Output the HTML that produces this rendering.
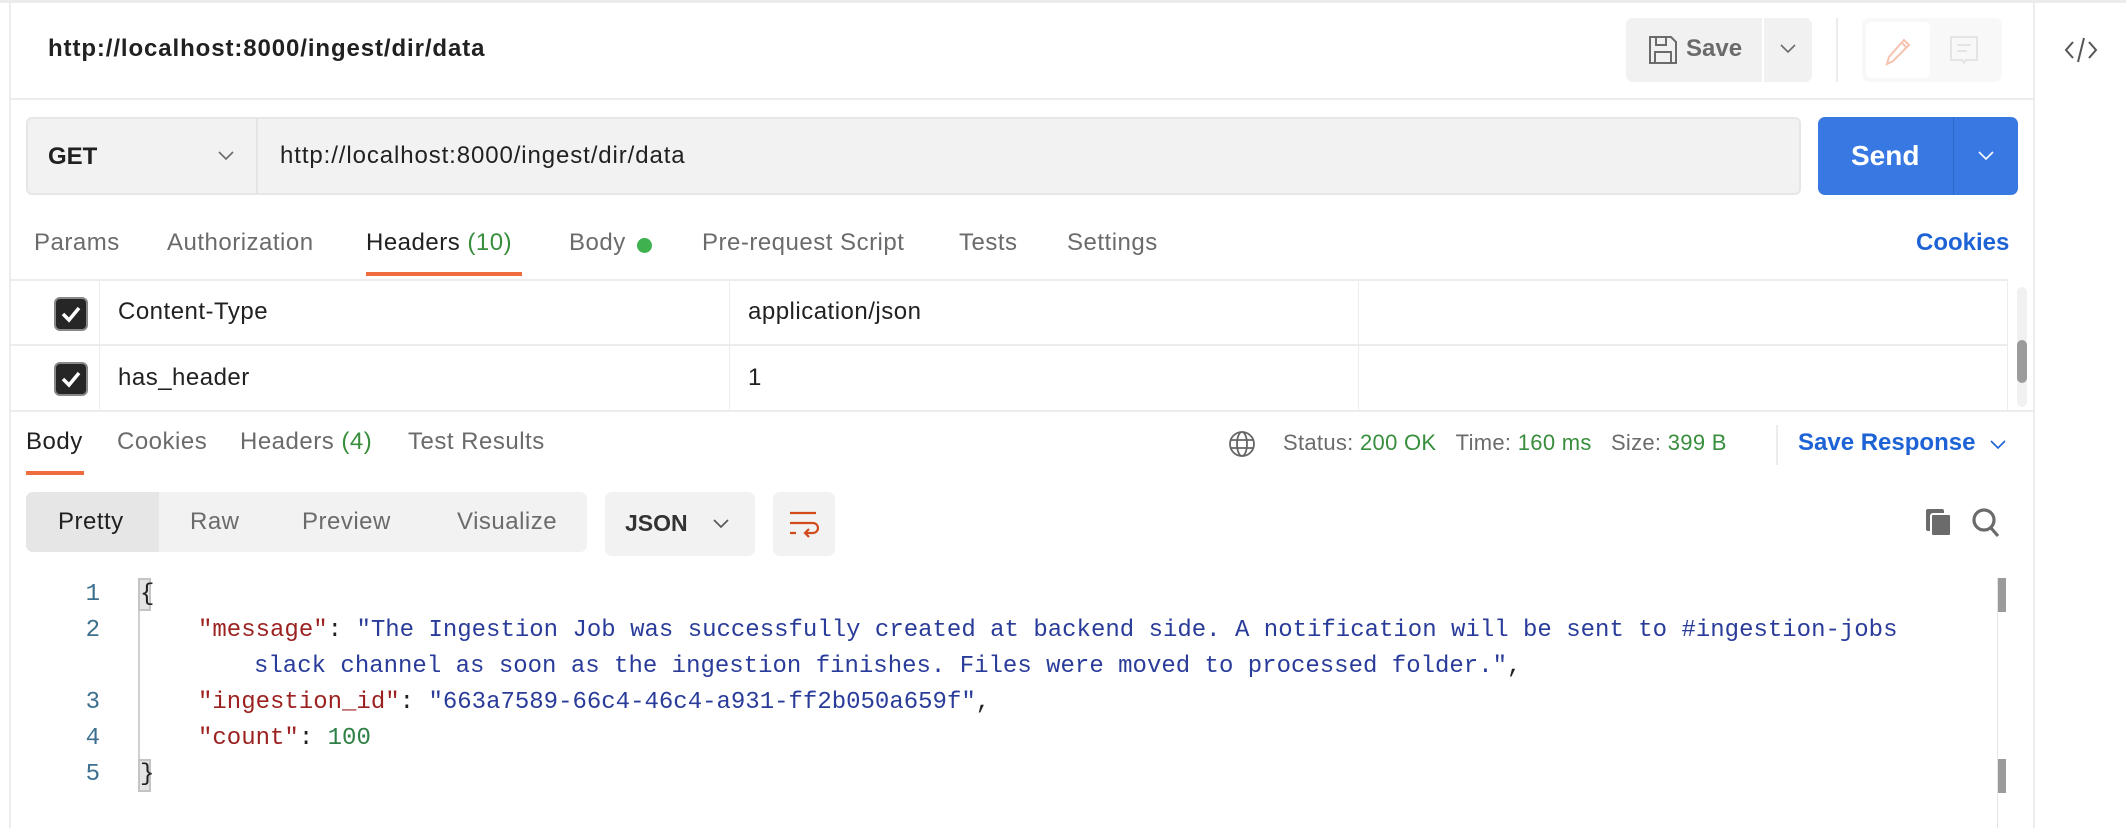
<!DOCTYPE html>
<html><head><meta charset="utf-8"><style>
*{box-sizing:border-box;margin:0;padding:0}
body{width:2126px;height:828px;background:#fff;position:relative;overflow:hidden;font-family:"Liberation Sans",Arial,sans-serif;color:#212121}
.a{position:absolute;white-space:nowrap}
.u{font-size:24px;letter-spacing:.5px}
.tab{font-size:24px;letter-spacing:.5px;color:#6b6b6b;top:229px}
.rt{font-size:24px;letter-spacing:.5px;color:#6b6b6b;top:428px}
.g{color:#388e3c}
.code{font-family:"Liberation Mono",monospace;font-size:24px;line-height:36px}
.ln{color:#3d6f8e;text-align:right;width:30px;left:70px}
.k{color:#9c2222}.s{color:#2a3c9a}.n{color:#2e8046}
</style></head><body>
<div class="a" style="left:0;top:0;width:2126px;height:3px;background:#ececec"></div>
<div class="a" style="left:9px;top:0;width:2px;height:828px;background:#ededed"></div>
<div class="a" style="left:2033px;top:0;width:2px;height:828px;background:#ededed"></div>
<div class="a" style="left:10px;top:98px;width:2023px;height:2px;background:#ececec"></div>
<div class="a" style="left:48px;top:35px;font-size:24px;letter-spacing:.9px;font-weight:bold;color:#212121">http://localhost:8000/ingest/dir/data</div>

<div class="a" style="left:1626px;top:18px;width:136px;height:64px;background:#f1f1f1;border-radius:7px 0 0 7px"></div>
<svg class="a" style="left:1648px;top:35px" width="30" height="30" viewBox="0 0 30 30" fill="none" stroke="#6b6b6b" stroke-width="2"><path d="M2 2h21l5 5v21H2z M8 2v8h10V2 M7 28V17h16v11"/></svg>
<div class="a" style="left:1686px;top:35px;font-size:24px;font-weight:bold;color:#6b6b6b">Save</div>
<div class="a" style="left:1764px;top:18px;width:48px;height:64px;background:#f1f1f1;border-radius:0 7px 7px 0"></div>
<svg class="a" style="left:1780px;top:44px" width="16" height="10"><path d="M1 1l7 7 7-7" stroke="#6b6b6b" stroke-width="1.6" fill="none"/></svg>
<div class="a" style="left:1836px;top:18px;width:2px;height:64px;background:#ececec"></div>
<div class="a" style="left:1862px;top:18px;width:140px;height:64px;background:#f8f8f8;border-radius:7px"></div>
<div class="a" style="left:1866px;top:22px;width:64px;height:56px;background:#fff;border-radius:6px"></div>
<svg class="a" style="left:1884px;top:36px" width="28" height="30"><path d="M3 28l2-7L20 4l5 5L9 25z M18 7l4 4" stroke="#f5c3b0" stroke-width="2" fill="none"/></svg>
<svg class="a" style="left:1949px;top:35px" width="30" height="30"><path d="M2 2h26v23H17l-2 3-2-3H2z M8 10h14 M8 16h10" stroke="#e4e4e4" stroke-width="2" fill="none"/></svg>
<svg class="a" style="left:2064px;top:36px" width="34" height="28" fill="none" stroke="#555" stroke-width="2"><path d="M9 6L2 14l7 8M25 6l7 8-7 8M20 2l-6 24"/></svg>

<div class="a" style="left:26px;top:117px;width:1775px;height:78px;background:#f2f2f2;border:2px solid #e6e6e6;border-radius:6px"></div>
<div class="a" style="left:256px;top:119px;width:2px;height:74px;background:#e4e4e4"></div>
<div class="a" style="left:48px;top:143px;font-size:24px;font-weight:bold">GET</div>
<svg class="a" style="left:218px;top:151px" width="16" height="10"><path d="M1 1l7 7 7-7" stroke="#6b6b6b" stroke-width="1.6" fill="none"/></svg>
<div class="a" style="left:280px;top:142px;font-size:24px;letter-spacing:.9px;color:#212121">http://localhost:8000/ingest/dir/data</div>
<div class="a" style="left:1818px;top:117px;width:200px;height:78px;background:#3878e2;border-radius:7px"></div>
<div class="a" style="left:1953px;top:117px;width:1px;height:78px;background:#2b68cc"></div>
<div class="a" style="left:1851px;top:140px;font-size:28px;font-weight:bold;color:#fff">Send</div>
<svg class="a" style="left:1978px;top:151px" width="16" height="10"><path d="M1 1l7 7 7-7" stroke="#fff" stroke-width="1.6" fill="none"/></svg>

<div class="a tab" style="left:34px">Params</div>
<div class="a tab" style="left:167px">Authorization</div>
<div class="a tab" style="left:366px;color:#212121">Headers <span class="g">(10)</span></div>
<div class="a" style="left:366px;top:272px;width:156px;height:4px;background:#ef6c3f"></div>
<div class="a tab" style="left:569px">Body</div>
<div class="a" style="left:637px;top:238px;width:15px;height:15px;border-radius:50%;background:#3fb24f"></div>
<div class="a tab" style="left:702px">Pre-request Script</div>
<div class="a tab" style="left:959px">Tests</div>
<div class="a tab" style="left:1067px">Settings</div>
<div class="a" style="left:1916px;top:229px;font-size:24px;font-weight:bold;color:#1e63d6">Cookies</div>

<div class="a" style="left:10px;top:279px;width:1998px;height:2px;background:#ececec"></div>
<div class="a" style="left:10px;top:344px;width:1998px;height:2px;background:#ececec"></div>
<div class="a" style="left:10px;top:410px;width:2023px;height:2px;background:#ececec"></div>
<div class="a" style="left:99px;top:281px;width:1px;height:130px;background:#ececec"></div>
<div class="a" style="left:729px;top:281px;width:1px;height:130px;background:#ececec"></div>
<div class="a" style="left:1358px;top:281px;width:1px;height:130px;background:#ececec"></div>
<div class="a" style="left:2007px;top:281px;width:1px;height:130px;background:#ececec"></div>
<div class="a" style="left:2017px;top:287px;width:10px;height:120px;background:#f1f1f1;border-radius:5px"></div>
<div class="a" style="left:2017px;top:340px;width:10px;height:43px;background:#9b9b9b;border-radius:5px"></div>
<div class="a" style="left:54px;top:297px;width:34px;height:34px;background:#262626;border:2px solid #888;border-radius:6px"></div>
<svg class="a" style="left:60px;top:305px" width="22" height="18"><path d="M3 9l6 6L19 3" stroke="#fff" stroke-width="3.5" fill="none"/></svg>
<div class="a" style="left:54px;top:362px;width:34px;height:34px;background:#262626;border:2px solid #888;border-radius:6px"></div>
<svg class="a" style="left:60px;top:370px" width="22" height="18"><path d="M3 9l6 6L19 3" stroke="#fff" stroke-width="3.5" fill="none"/></svg>
<div class="a u" style="left:118px;top:298px">Content-Type</div>
<div class="a u" style="left:748px;top:298px">application/json</div>
<div class="a u" style="left:118px;top:364px">has_header</div>
<div class="a u" style="left:748px;top:364px">1</div>

<div class="a rt" style="left:26px;color:#212121">Body</div>
<div class="a" style="left:26px;top:471px;width:58px;height:4px;background:#ef6c3f"></div>
<div class="a rt" style="left:117px">Cookies</div>
<div class="a rt" style="left:240px">Headers <span class="g">(4)</span></div>
<div class="a rt" style="left:408px">Test Results</div>
<svg class="a" style="left:1228px;top:430px" width="28" height="28" fill="none" stroke="#666" stroke-width="1.8"><circle cx="14" cy="14" r="12"/><ellipse cx="14" cy="14" rx="5" ry="12"/><path d="M2 10h24M2 18h24"/></svg>
<div class="a" style="left:1283px;top:430px;font-size:22px;letter-spacing:.3px;color:#6b6b6b">Status: <span class="g">200 OK</span>&nbsp;&nbsp;&nbsp;Time: <span class="g">160 ms</span>&nbsp;&nbsp;&nbsp;Size: <span class="g">399 B</span></div>
<div class="a" style="left:1776px;top:425px;width:2px;height:40px;background:#ececec"></div>
<div class="a" style="left:1798px;top:429px;font-size:24px;font-weight:bold;color:#1e63d6">Save Response</div>
<svg class="a" style="left:1990px;top:440px" width="16" height="10"><path d="M1 1l7 7 7-7" stroke="#1e63d6" stroke-width="1.6" fill="none"/></svg>

<div class="a" style="left:26px;top:492px;width:561px;height:60px;background:#f2f2f2;border-radius:7px"></div>
<div class="a" style="left:26px;top:492px;width:133px;height:60px;background:#e6e6e6;border-radius:7px 0 0 7px"></div>
<div class="a u" style="left:58px;top:508px;color:#212121">Pretty</div>
<div class="a u" style="left:190px;top:508px;color:#6b6b6b">Raw</div>
<div class="a u" style="left:302px;top:508px;color:#6b6b6b">Preview</div>
<div class="a u" style="left:457px;top:508px;color:#6b6b6b">Visualize</div>
<div class="a" style="left:605px;top:492px;width:150px;height:64px;background:#f2f2f2;border-radius:7px"></div>
<div class="a" style="left:625px;top:510px;font-size:23px;font-weight:bold;color:#333">JSON</div>
<svg class="a" style="left:713px;top:519px" width="16" height="10"><path d="M1 1l7 7 7-7" stroke="#555" stroke-width="1.6" fill="none"/></svg>
<div class="a" style="left:773px;top:492px;width:62px;height:64px;background:#f2f2f2;border-radius:7px"></div>
<svg class="a" style="left:789px;top:510px" width="30" height="30" fill="none" stroke="#d24b1c" stroke-width="2.2"><path d="M1 3h26M1 13h23a5 5 0 0 1 0 10h-8M20 19l-4 4 4 4M1 23h6"/></svg>
<svg class="a" style="left:1924px;top:508px" width="30" height="30"><rect x="2" y="1" width="18" height="22" rx="2" fill="#6b6b6b"/><rect x="7" y="6" width="20" height="22" rx="2" fill="#6b6b6b" stroke="#fff" stroke-width="2"/></svg>
<svg class="a" style="left:1971px;top:507px" width="30" height="32" fill="none" stroke="#6b6b6b" stroke-width="3.2"><circle cx="13" cy="13" r="10"/><path d="M20 21l7 8"/></svg>

<div class="a" style="left:138px;top:578px;width:2px;height:200px;background:#d0d0d0"></div>
<div class="a" style="left:138px;top:578px;width:13px;height:33px;background:#e4e4e4;border:2px solid #c4c4c4"></div>
<div class="a" style="left:138px;top:759px;width:13px;height:33px;background:#e4e4e4;border:2px solid #c4c4c4"></div>
<div class="a code ln" style="top:577px">1</div>
<div class="a code ln" style="top:613px">2</div>
<div class="a code ln" style="top:685px">3</div>
<div class="a code ln" style="top:721px">4</div>
<div class="a code ln" style="top:757px">5</div>
<div class="a code" style="left:140px;top:577px">{</div>
<div class="a code" style="left:198px;top:613px"><span class="k">"message"</span>: <span class="s">"The Ingestion Job was successfully created at backend side. A notification will be sent to #ingestion-jobs</span></div>
<div class="a code s" style="left:254px;top:649px">slack channel as soon as the ingestion finishes. Files were moved to processed folder."<span style="color:#212121">,</span></div>
<div class="a code" style="left:198px;top:685px"><span class="k">"ingestion_id"</span>: <span class="s">"663a7589-66c4-46c4-a931-ff2b050a659f"</span>,</div>
<div class="a code" style="left:198px;top:721px"><span class="k">"count"</span>: <span class="n">100</span></div>
<div class="a code" style="left:140px;top:757px">}</div>
<div class="a" style="left:1997px;top:578px;width:1px;height:250px;background:#e4e4e4"></div>
<div class="a" style="left:1998px;top:578px;width:8px;height:34px;background:#9b9b9b"></div>
<div class="a" style="left:1998px;top:759px;width:8px;height:34px;background:#9b9b9b"></div>
</body></html>
